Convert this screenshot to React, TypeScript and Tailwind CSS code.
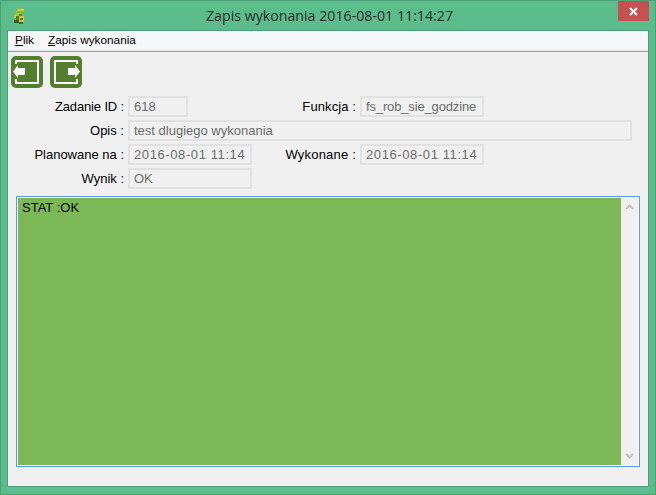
function NavIcon({ dir }: { dir: "left" | "right" }) {
  const flip = dir === "left";
  return (
    <svg width="32" height="32" viewBox="0 0 32 32">
      <rect x="0" y="0" width="32" height="32" rx="5" fill="#527f2d" />
      <g transform={flip ? "translate(32 0) scale(-1 1)" : undefined} fill="#ffffff">
        <path d="M28 8V4H4v24h24v-5h-2v3H6V6h20v2z" />
        <path d="M18 12h7V9l5 6.5-5 6.5v-3h-7z" />
      </g>
    </svg>
  );
}

function Frog() {
  return (
    <svg width="12" height="16" viewBox="0 0 12 16" shapeRendering="crispEdges">
      <rect x="5" y="0" width="4" height="1" fill="#a9b52f" />
      <rect x="4" y="1" width="7" height="2" fill="#b9cf35" />
      <rect x="8" y="1" width="3" height="1" fill="#e0d64a" />
      <rect x="3" y="3" width="8" height="2" fill="#8fb82e" />
      <rect x="2" y="5" width="5" height="3" fill="#a7c832" />
      <rect x="1" y="7" width="3" height="3" fill="#c8c83a" />
      <rect x="6" y="6" width="3" height="2" fill="#5f8a2a" />
      <rect x="3" y="8" width="3" height="4" fill="#4f7f2a" />
      <rect x="6" y="8" width="5" height="6" fill="#d8c23c" />
      <rect x="7" y="10" width="3" height="2" fill="#5f7f2a" />
      <rect x="1" y="12" width="5" height="3" fill="#35602a" />
      <rect x="6" y="14" width="4" height="2" fill="#3d6a2a" />
    </svg>
  );
}

function Field({ value, className }: { value: string; className: string }) {
  return (
    <div
      className={`h-[21px] border-2 border-[#e1e1e1] bg-[#f0f0f0] pl-[4px] text-[13px] leading-[17px] text-[#6d6d6d] whitespace-nowrap overflow-hidden ${className}`}
    >
      {value}
    </div>
  );
}

function Label({ text, className }: { text: string; className: string }) {
  return (
    <div className={`text-right text-[13px] leading-[21px] text-black whitespace-nowrap ${className}`}>
      {text}
    </div>
  );
}

export default function App() {
  return (
    <div
      className="w-[656px] h-[495px] flex flex-col border border-[#4e9f78] bg-[#5bbd8c] overflow-hidden"
      style={{ fontFamily: '"Liberation Sans", Arial, sans-serif' }}
    >
      {/* BARRA DE TITULO */}
      <div className="h-[29px] shrink-0 flex items-start pl-[12px]">
        <div className="mt-[7px]">
          <Frog />
        </div>
        <div
          className="flex-1 text-center text-[14.2px] leading-[20px] mt-[5px] text-[#2b2b2b] pl-[16px]"
          style={{ fontFamily: '"Open Sans", sans-serif' }}
        >
          Zapis wykonania 2016-08-01 11:14:27
        </div>
        <div className="w-[31px] h-[20px] mr-[6px] bg-[#c75050] flex items-center justify-center">
          <svg width="9" height="9" viewBox="0 0 9 9">
            <path d="M1 1l7 7M8 1l-7 7" stroke="#ffffff" strokeWidth="2" />
          </svg>
        </div>
      </div>

      {/* CLIENTE */}
      <div className="flex-1 mx-[6px] mb-[7px] border border-[#4e9f78] bg-[#f0f0f0] flex flex-col">
        {/* MENU */}
        <div className="h-[19px] shrink-0 bg-[#f5f6f8] flex items-center gap-[14px] pl-[7px] text-[11.8px] text-black">
          <span>
            <span className="underline">P</span>lik
          </span>
          <span>
            <span className="underline">Z</span>apis wykonania
          </span>
        </div>
        <div className="h-[2px] shrink-0 bg-[#a0a0a0] border-t border-[#e4e4e4]" />

        {/* BOTONES */}
        <div className="flex gap-[7px] pl-[3px] pt-[4px] shrink-0">
          <NavIcon dir="left" />
          <NavIcon dir="right" />
        </div>

        {/* CAMPOS */}
        <div className="flex flex-col gap-[3px] mt-[8px] shrink-0">
          <div className="flex">
            <Label text="Zadanie ID :" className="w-[116px] tracking-[-0.15px]" />
            <Field value="618" className="ml-[4px] w-[60px]" />
            <Label text="Funkcja :" className="w-[168px] tracking-[0.1px]" />
            <Field value="fs_rob_sie_godzine" className="ml-[4px] w-[124px] tracking-[-0.15px]" />
          </div>
          <div className="flex">
            <Label text="Opis :" className="w-[116px]" />
            <Field value="test dlugiego wykonania" className="ml-[4px] w-[504px]" />
          </div>
          <div className="flex">
            <Label text="Planowane na :" className="w-[116px]" />
            <Field value="2016-08-01 11:14" className="ml-[4px] w-[124px] tracking-[0.6px]" />
            <Label text="Wykonane :" className="w-[104px] tracking-[0.2px]" />
            <Field value="2016-08-01 11:14" className="ml-[4px] w-[124px] tracking-[0.6px]" />
          </div>
          <div className="flex">
            <Label text="Wynik :" className="w-[116px]" />
            <Field value="OK" className="ml-[4px] w-[124px]" />
          </div>
        </div>

        {/* TEXTO */}
        <div className="mt-[7px] mx-[8px] h-[271px] border border-[#569de5] p-px bg-white flex">
          <div className="flex-1 bg-[#7cb856] pl-[4px] pt-[2px] text-[13px] leading-[15px] text-black">
            STAT :OK
          </div>
          <div className="w-[17px] bg-[#f0f0f0] flex flex-col justify-between items-center py-[6px]">
            <svg width="9" height="6" viewBox="0 0 9 6">
              <path d="M1 5l3.5-3.5L8 5" fill="none" stroke="#c0c0c0" strokeWidth="2" />
            </svg>
            <svg width="9" height="6" viewBox="0 0 9 6">
              <path d="M1 1l3.5 3.5L8 1" fill="none" stroke="#c0c0c0" strokeWidth="2" />
            </svg>
          </div>
        </div>
      </div>
    </div>
  );
}
